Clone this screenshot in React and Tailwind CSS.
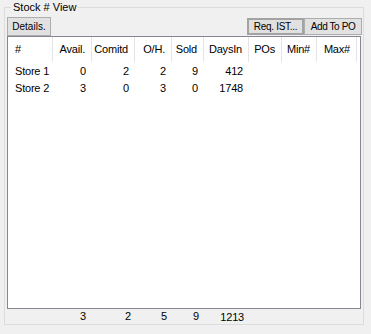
const columns = [
  { label: "#", align: "left" },
  { label: "Avail." },
  { label: "Comitd" },
  { label: "O/H." },
  { label: "Sold" },
  { label: "DaysIn" },
  { label: "POs" },
  { label: "Min#" },
  { label: "Max#" },
];

const rows = [
  ["Store 1", "0", "2", "2", "9", "412", "", "", ""],
  ["Store 2", "3", "0", "3", "0", "1748", "", "", ""],
];

const gridCols = "grid grid-cols-[45px_39px_43px_37px_32px_45px_33px_35px_40px]";

function App() {
  return (
    <div className="w-[371px] h-[334px] bg-[#f0f0f0] text-black text-[11px] font-['Liberation_Sans',Arial,sans-serif] leading-none tracking-[-0.2px]">
      <fieldset className="ml-[4px] w-[360px] h-[325px] border border-[#dcdcdc] flex flex-col">
        <legend className="ml-[6px] px-[2px] h-[14px] leading-[14px] text-[11px] tracking-normal">Stock # View</legend>

        <div className="flex justify-between items-start mt-[3px] ml-[2px] mr-[1px] h-[19px]">
          <button className="h-[19px] w-[44px] border border-[#adadad] bg-[#e1e1e1] text-[10px] leading-none tracking-normal">
            Details.
          </button>
          <div className="flex mt-[1px]">
            <button className="h-[17px] w-[57px] border-2 border-[#a3a3a3] bg-[#e1e1e1] text-[10px] leading-none tracking-[-0.3px]">
              Req. IST...
            </button>
            <button className="h-[17px] w-[58px] border border-[#adadad] bg-[#e1e1e1] text-[10px] leading-none tracking-[-0.4px]">
              Add To PO
            </button>
          </div>
        </div>

        <div className="ml-[2px] w-[354px] h-[273px] border border-[#828790] bg-white">
          <div className={`${gridCols} h-[25px]`}>
            {columns.map((c) => (
              <div
                key={c.label}
                className={`flex items-center border-r border-[#e5e5e5] ${
                  c.align === "left" ? "pl-[7px]" : "justify-end pr-[6px]"
                }`}
              >
                {c.label}
              </div>
            ))}
          </div>
          {rows.map((r) => (
            <div key={r[0]} className={`${gridCols} h-[17px]`}>
              {r.map((v, i) => (
                <div
                  key={i}
                  className={`flex items-center pt-[1px] ${i === 0 ? "pl-[7px]" : "justify-end pr-[6px]"}`}
                >
                  {v}
                </div>
              ))}
            </div>
          ))}
        </div>

        <div className={`${gridCols} ml-[3px] h-[15px]`}>
          <div />
          <div className="flex items-center justify-end pr-[6px]">3</div>
          <div className="flex items-center justify-end pr-[4px]">2</div>
          <div className="flex items-center justify-end pr-[5px]">5</div>
          <div className="flex items-center justify-end pr-[5px]">9</div>
          <div className="flex items-center justify-end pr-[5px] pt-[2px]">1213</div>
        </div>
      </fieldset>
    </div>
  );
}

export default App;
